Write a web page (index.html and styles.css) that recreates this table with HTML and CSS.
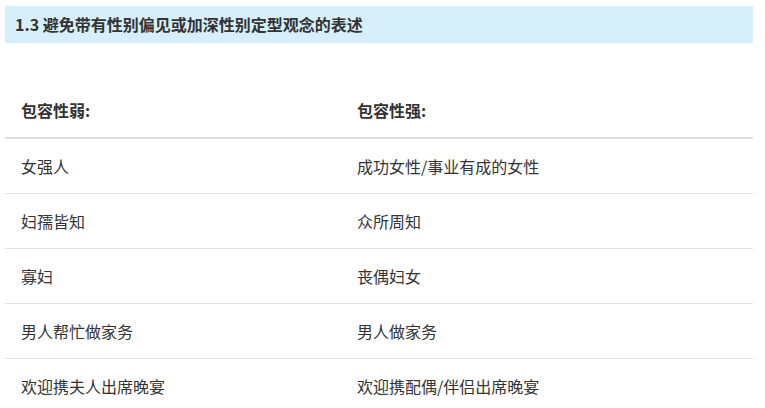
FILE: index.html
```html
<!DOCTYPE html>
<html lang="zh-CN">
<head>
<meta charset="utf-8">
<link rel="stylesheet" href="styles.css">
</head>
<body>
<div class="page">
  <h3 class="banner">1.3 避免带有性别偏见或加深性别定型观念的表述</h3>
  <table class="terms">
    <thead>
      <tr><th>包容性弱:</th><th>包容性强:</th></tr>
    </thead>
    <tbody>
      <tr><td>女强人</td><td>成功女性/事业有成的女性</td></tr>
      <tr><td>妇孺皆知</td><td>众所周知</td></tr>
      <tr><td>寡妇</td><td>丧偶妇女</td></tr>
      <tr><td>男人帮忙做家务</td><td>男人做家务</td></tr>
      <tr><td>欢迎携夫人出席晚宴</td><td>欢迎携配偶/伴侣出席晚宴</td></tr>
    </tbody>
  </table>
</div>
</body>
</html>
```

FILE: styles.css
```css
html, body {
  margin: 0;
  padding: 0;
  background: #ffffff;
}
body {
  font-family: "Noto Sans CJK SC", "Noto Sans", sans-serif;
  color: #333333;
}
.page {
  padding: 6px 12px 0 5px;
}
.banner {
  margin: 0;
  height: 37px;
  line-height: 37px;
  padding: 0 0 0 10px;
  background: #d6effa;
  font-size: 16px;
  font-weight: bold;
  color: #333333;
}
.terms {
  margin-top: 39px;
  width: 748px;
  border-collapse: collapse;
  font-size: 16px;
}
.terms th,
.terms td {
  text-align: left;
  padding: 0 16px;
  height: 54px;
  line-height: 20px;
  vertical-align: middle;
}
.terms th {
  font-weight: bold;
  height: 55px;
  border-bottom: 2px solid #dddddd;
}
.terms td {
  border-bottom: 1px solid #e2e2e2;
}
.terms th:first-child,
.terms td:first-child {
  width: 304px;
}
```
